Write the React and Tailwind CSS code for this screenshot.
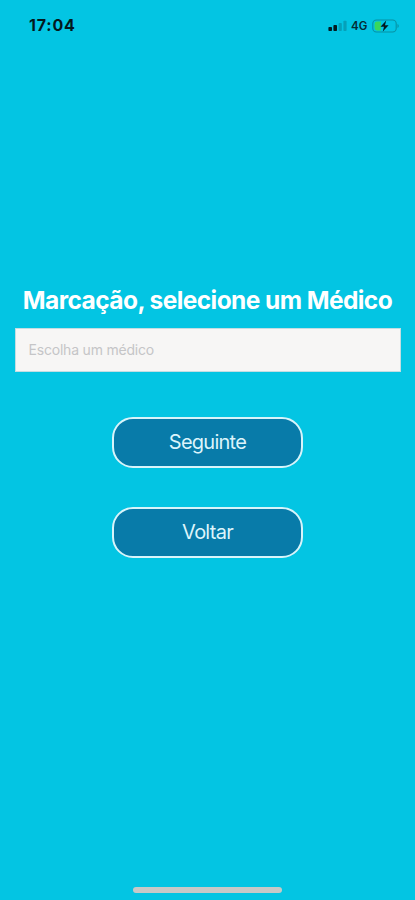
function StatusIcons() {
  return (
    <div className="flex items-center">
      <svg width="20" height="12" viewBox="0 0 20 12" aria-hidden="true">
        <rect x="0.4" y="7" width="3.6" height="4" rx="0.8" fill="#041c22" />
        <rect x="5.4" y="5" width="3.6" height="6" rx="0.8" fill="#041c22" />
        <rect x="10.6" y="3" width="3.2" height="8" rx="0.8" fill="#05a0b9" />
        <rect x="15.4" y="0.8" width="3.2" height="10.2" rx="0.8" fill="#05a0b9" />
      </svg>
      <span className="ml-[3px] w-[18px] whitespace-nowrap text-[11.5px] leading-[14px] font-semibold text-[#052b34]">4G</span>
      <svg className="ml-[3px]" width="28" height="14" viewBox="0 0 28 14" aria-hidden="true">
        <rect x="0.8" y="1" width="23.4" height="12" rx="3.6" fill="none" stroke="#0792a4" strokeWidth="1.1" />
        <path d="M5 2.6h3.8v8.8H5a2.4 2.4 0 0 1-2.4-2.4V5A2.4 2.4 0 0 1 5 2.6Z" fill="#39d75c" />
        <path d="M25.5 5v4c1.7-.7 1.7-3.3 0-4Z" fill="#0792a4" />
        <path d="M14.2 1.6 8.5 7.7h3.5l-1.2 4.8 5.8-6.3H13Z" fill="#03181d" />
      </svg>
    </div>
  );
}

function ActionButton({ children }) {
  return (
    <button className="h-[51px] w-[191px] rounded-[21px] border-2 border-[#d8f4fa] bg-[#087ba9] pb-[2px] text-[20px] leading-6 tracking-[-0.75px] text-[#dcf4fb]">
      {children}
    </button>
  );
}

export default function App() {
  return (
    <div className="flex h-[900px] w-full flex-col items-center overflow-hidden bg-[#03c5e3] font-['Inter','Liberation_Sans',sans-serif]">
      <header className="flex h-[52px] w-full items-center justify-between pr-[15px] pl-[29px]">
        <span className="pb-[2px] text-[16px] font-bold tracking-[0.8px] text-[#03191e]">17:04</span>
        <StatusIcons />
      </header>
      <main className="flex w-full flex-col items-center pt-[232px]">
        <h1 className="h-8 text-[24.5px] leading-8 font-bold tracking-[-0.58px] whitespace-nowrap text-white">
          Marcação, selecione um Médico
        </h1>
        <input
          className="mt-[12px] h-[44px] w-[386px] border border-[#c3dde2] bg-[#f7f6f5] px-[13px] pb-[2px] text-[14px] tracking-[-0.2px] text-[#c5c5c7] outline-none placeholder:text-[#c5c5c7]"
          placeholder="Escolha um médico"
        />
        <div className="mt-[45px] flex flex-col gap-[39px]">
          <ActionButton>Seguinte</ActionButton>
          <ActionButton>Voltar</ActionButton>
        </div>
      </main>
      <div className="mt-auto mb-[7px] h-[6px] w-[149px] rounded-full bg-[#c7c9c7]" />
    </div>
  );
}
